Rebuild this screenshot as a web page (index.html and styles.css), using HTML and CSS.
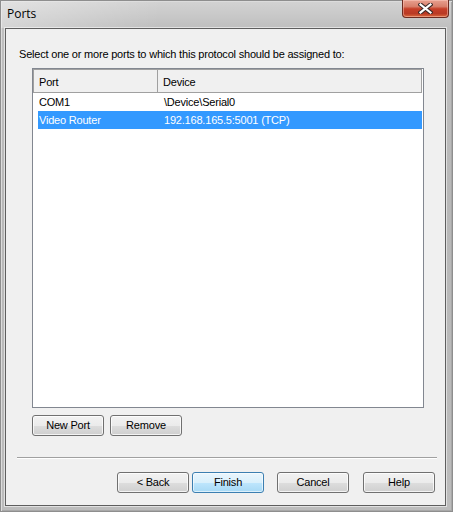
FILE: index.html
```html
<!DOCTYPE html>
<html>
<head>
<meta charset="utf-8">
<title>Ports</title>
<link rel="stylesheet" href="styles.css">
</head>
<body>
<div class="window">
  <div class="titlebar">
    <span class="title">Ports</span>
    <div class="close">
      <svg width="15" height="11" viewBox="0 0 15 11">
        <path d="M2.5 1.5 L12.5 9.5 M12.5 1.5 L2.5 9.5" stroke="#3b2a28" stroke-width="4.2" stroke-linecap="square" fill="none"/>
        <path d="M2.5 1.5 L12.5 9.5 M12.5 1.5 L2.5 9.5" stroke="#ffffff" stroke-width="2.2" stroke-linecap="square" fill="none"/>
      </svg>
    </div>
  </div>
  <div class="client">
    <p class="prompt">Select one or more ports to which this protocol should be assigned to:</p>
    <div class="listbox">
      <div class="header">
        <div class="hcell hport">Port</div>
        <div class="hcell hdevice">Device</div>
      </div>
      <div class="row">
        <span class="cell cport">COM1</span>
        <span class="cell cdevice">\Device\Serial0</span>
      </div>
      <div class="row selected">
        <span class="cell cport">Video Router</span>
        <span class="cell cdevice">192.168.165.5:5001 (TCP)</span>
      </div>
    </div>
    <div class="actions">
      <button class="btn">New Port</button>
      <button class="btn">Remove</button>
    </div>
    <div class="sep"></div>
    <div class="footer">
      <button class="btn">&lt; Back</button>
      <button class="btn default">Finish</button>
      <button class="btn cancel">Cancel</button>
      <button class="btn help">Help</button>
    </div>
  </div>
</div>
</body>
</html>
```

FILE: styles.css
```css
html, body {
  margin: 0;
  padding: 0;
  background: #ffffff;
}

body {
  width: 453px;
  height: 512px;
  overflow: hidden;
  font-family: "Liberation Sans", Arial, sans-serif;
  font-size: 11px;
  letter-spacing: -0.2px;
  color: #000;
}

.window {
  width: 453px;
  height: 512px;
  box-sizing: border-box;
  border: 1px solid #8e8e8e;
  padding: 0 6px 5px 4px;
  display: flex;
  flex-direction: column;
  background: linear-gradient(to bottom, #d3d3d3 0px, #bfbfbf 27px, #b8b8b8 200px, #bcbcbc 100%);
  box-shadow: inset 1px 1px 0 #dcdcdc, inset -1px -1px 0 #a8a8a8;
}

.titlebar {
  height: 27px;
  flex: none;
  display: flex;
  justify-content: space-between;
  align-items: flex-start;
  background: linear-gradient(100deg, rgba(255,255,255,0.35) 0px, rgba(255,255,255,0) 160px);
  margin: 0 -6px 0 -4px;
  padding: 0 4px 0 6px;
}

.title {
  font-family: "Open Sans", "Noto Sans", sans-serif;
  font-size: 12px;
  letter-spacing: 0;
  line-height: 14px;
  padding-top: 6px;
  color: #000;
}

.close {
  width: 47px;
  height: 18px;
  box-sizing: border-box;
  margin-top: -1px;
  margin-right: -1px;
  border: 1px solid #6d2b20;
  border-top: none;
  border-radius: 0 0 4px 4px;
  background: linear-gradient(to bottom, #e8a08f 0%, #d8806c 38%, #c63f28 52%, #b93a25 80%, #dc6a3c 100%);
  box-shadow: inset 0 0 0 1px rgba(255,210,200,0.45);
  display: flex;
  align-items: center;
  justify-content: center;
}

.close svg {
  display: block;
  margin-top: -1px;
}

.client {
  flex: 1;
  border: 1px solid #5e5e5e;
  background: #f0f0f0;
  box-shadow: 0 0 0 1px rgba(255,255,255,0.55);
  display: flex;
  flex-direction: column;
}

.prompt {
  margin: 19px 0 0 13px;
  line-height: 13px;
}

.listbox {
  margin: 7px 0 0 26px;
  width: 392px;
  height: 340px;
  box-sizing: border-box;
  border: 1px solid #828790;
  background: #ffffff;
}

.header {
  display: flex;
  height: 24px;
  box-sizing: border-box;
  margin-right: 1px;
  border: 1px solid #a0a0a0;
  background: #f0f0f0;
}

.hcell {
  line-height: 20px;
  padding: 2px 0 0 5px;
  box-sizing: border-box;
}

.hport {
  width: 124px;
  border-right: 1px solid #a0a0a0;
}

.hdevice {
  flex: 1;
}

.row {
  display: flex;
  height: 18px;
  line-height: 18px;
  margin: 0 1px 0 5px;
}

.row.selected {
  background: #3399ff;
  color: #ffffff;
}

.cell {
  padding-left: 1px;
  box-sizing: border-box;
}

.cport {
  width: 125px;
}

.cdevice {
  flex: 1;
}

.btn {
  width: 72px;
  height: 21px;
  box-sizing: border-box;
  margin: 0;
  padding: 0;
  border: 1px solid #707070;
  border-radius: 3px;
  background: linear-gradient(to bottom, #f2f2f2 0%, #ebebeb 50%, #dddddd 51%, #cfcfcf 100%);
  box-shadow: inset 0 0 0 1px rgba(255,255,255,0.75);
  font-family: "Liberation Sans", Arial, sans-serif;
  font-size: 11px;
  letter-spacing: -0.2px;
  color: #000;
  line-height: 19px;
  text-align: center;
}

.btn.default {
  border-color: #3c7fb1;
  background: linear-gradient(to bottom, #eaf6fd 0%, #d9f0fc 50%, #bee6fd 51%, #a7d9f5 100%);
  box-shadow: inset 0 0 0 1px rgba(255,255,255,0.6);
}

.actions {
  display: flex;
  gap: 6px;
  margin: 7px 0 0 26px;
}

.sep {
  height: 1px;
  margin: 21px 8px 0 11px;
  background: #a0a0a0;
  box-shadow: 0 1px 0 #ffffff;
}

.footer {
  display: flex;
  justify-content: flex-end;
  margin: 14px 10px 0 0;
}

.footer .btn.default {
  margin-left: 3px;
}

.footer .btn.cancel {
  margin-left: 13px;
}

.footer .btn.help {
  margin-left: 14px;
}
```
